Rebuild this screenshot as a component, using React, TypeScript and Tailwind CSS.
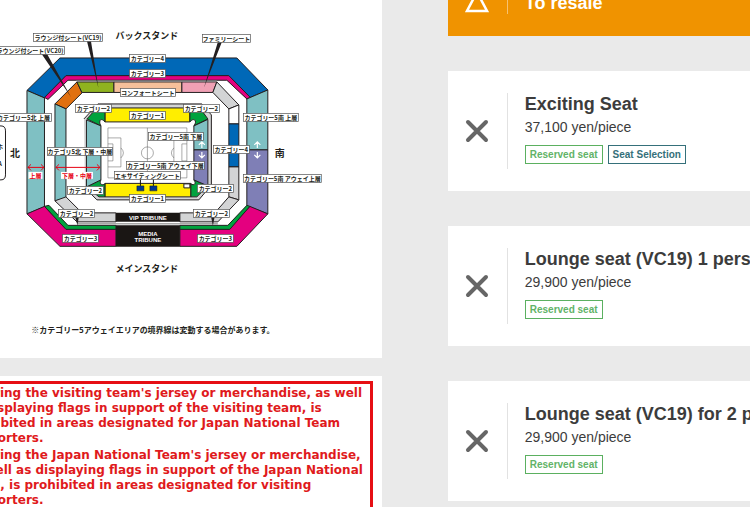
import React from 'react';

type Tag = { text: string; tone: 'green' | 'teal' };

type Seat = { name: string; price: string; tags: Tag[] };

const reserved: Tag = { text: 'Reserved seat', tone: 'green' };

const seats: Seat[] = [
  {
    name: 'Exciting Seat',
    price: '37,100 yen/piece',
    tags: [reserved, { text: 'Seat Selection', tone: 'teal' }],
  },
  { name: 'Lounge seat (VC19) 1 person', price: '29,900 yen/piece', tags: [reserved] },
  { name: 'Lounge seat (VC19) for 2 people', price: '29,900 yen/piece', tags: [reserved] },
];

// x, y, width, text
const labels: [number, number, number, string][] = [
  [33, 33, 70, 'ラウンジ付シート(VC19)'],
  [-5, 46, 70, 'ラウンジ付シート(VC20)'],
  [202, 34, 49, 'ファミリーシート'],
  [129, 54, 37, 'カテゴリー4'],
  [129, 69, 37, 'カテゴリー3'],
  [120, 88, 56, 'コンフォートシート'],
  [75, 104, 37, 'カテゴリー2'],
  [183, 104, 37, 'カテゴリー2'],
  [129, 111, 37, 'カテゴリー1'],
  [-5, 113, 57, 'カテゴリー5北 上層'],
  [243, 113, 56, 'カテゴリー5南 上層'],
  [148, 132, 56, 'カテゴリー5南 下層'],
  [213, 145, 37, 'カテゴリー4'],
  [47, 147, 66, 'カテゴリ5北 下層・中層'],
  [126, 161, 79, 'カテゴリー5南 アウェイ下層'],
  [114, 171, 67, 'エキサイティングシート'],
  [67, 186, 37, 'カテゴリー2'],
  [197, 184, 37, 'カテゴリー2'],
  [129, 194, 37, 'カテゴリー1'],
  [58, 209, 37, 'カテゴリー2'],
  [193, 209, 37, 'カテゴリー2'],
  [62, 234, 37, 'カテゴリー3'],
  [197, 234, 37, 'カテゴリー3'],
  [243, 174, 79, 'カテゴリー5南 アウェイ上層'],
];

function StadiumMap() {
  return (
    <svg
      viewBox="0 0 382 358"
      className="block w-full font-['Noto_Sans_CJK_JP',sans-serif] font-bold"
      role="img"
      aria-label="スタジアム座席図"
    >
      <g stroke="#231f20" strokeWidth="1" strokeLinejoin="round">
        {/* outer ring */}
        <path d="M27 90.5 60 58H237L268 90 247 99 228 76H66L44.5 98Z" fill="#0068b7" />
        <path d="M44.5 97.5 66 75.7H229L250.5 97.5 247 99 227 80.3H68L48 99.5Z" fill="#e4007f" />
        <path d="M27 90.5 44.5 98V207L27 214Z" fill="#7fc0c3" />
        <path d="M268 90 247 99V150H268Z" fill="#7fc0c3" />
        <path d="M247 150H268V214L247 206Z" fill="#7f7fb6" />
        <path d="M27 214 44.5 206.5 66 229H116V246.5H60Z" fill="#e4007f" />
        <path d="M268 214 250 206.5 229 229H180V246.5H237Z" fill="#e4007f" />
        <path d="M44.5 206.5 49 205.5 68 225.5H116V229.5H66Z" fill="#00a33e" />
        <path d="M250 206.5 247 205.5 228 225.5H180V229.5H230Z" fill="#00a33e" />

        {/* middle ring */}
        <path d="M55 104 77 82 82 93 66 109Z" fill="#e07010" />
        <path d="M77 82H114V92.5H82Z" fill="#8fb31f" />
        <path d="M114 82H182V92.5H114Z" fill="#f6c09a" />
        <path d="M182 82H217L213 92.5H182Z" fill="#f0a0b4" />
        <path d="M217 82 239 105 229 109 213 92.5Z" fill="#d3d4d5" />
        <path d="M229 109 239 105V124H229Z" fill="#fff" />
        <path d="M229 124H239V167H229Z" fill="#0068b7" />
        <path d="M229 167H239V200L229 197Z" fill="#d3d4d5" />
        <path d="M239 200 218 222H180V213H215L229 197Z" fill="#d3d4d5" />
        <path d="M55 104 66 109V198L55 201Z" fill="#7fc0c3" />
        <path d="M55 201 66 197 82 213H116V222H77Z" fill="#d3d4d5" />
        <path d="M76 80.8H217M78 224H218" fill="none" stroke="#777" />

        {/* inner ring */}
        <path d="M84 119 98 104H202L211.5 115V185L199 200H97L85 188" fill="#d3d4d5" />
        <path d="M87 119H208V187L197 197H100L87 187Z" fill="#fff" stroke="none" />
        <path d="M105 108H190V122H105Z" fill="#ffee00" />
        <path d="M105 183.5H191V197H105Z" fill="#ffee00" />
        <path d="M87 119 97 108H105V122C101 117 98 121 101 126Z" fill="#00a33e" />
        <path d="M208 119 200 108H190V122C194 117 198 121 194 126Z" fill="#00a33e" />
        <path d="M87 187 101 180C99 184 102 186 105 184V197H99Z" fill="#00a33e" />
        <path d="M208 186 194 180C197 184 194 186 191 184V197H197Z" fill="#00a33e" />
        <path d="M86.5 120 101 126V180L86.5 187Z" fill="#7fc0c3" />
        <path d="M208 119.5 194 126V150H208Z" fill="#7fc0c3" />
        <path d="M194 150H208V186L194 180Z" fill="#7f7fb6" />
        <path d="M184 184H190V188H184Z" fill="#fff" />
      </g>

      {/* pitch */}
      <g fill="none" stroke="#555" strokeWidth="0.5">
        <path d="M108 128H187V178H108ZM147.5 128V178M108 138H121V167H108M108 144H113V161H108M187 138H174V167H187M187 144H182V161H187M121 148Q126 153 121 158M174 148Q169 153 174 158" />
        <circle cx="147.5" cy="153" r="6" />
      </g>
      <path d="M137 186H144V191H137ZM150 186H157V191H150Z" fill="#003894" stroke="#111" strokeWidth="0.5" />
      <path d="M140.5 179V186M153.5 179V186" stroke="#111" />

      {/* press seats */}
      <path d="M116 213H180V222H116ZM116 225.5H180V247H116Z" fill="#1a1614" />
      <g fill="#fff" textAnchor="middle" fontSize="6" fontFamily="Liberation Sans, sans-serif">
        <text x="148" y="220">VIP TRIBUNE</text>
        <text x="148" y="236">MEDIA</text>
        <text x="148" y="242">TRIBUNE</text>
      </g>

      {/* pointers */}
      <path d="M87 41H91L98.5 88ZM41 53 46 52 71 97ZM218 42H222L204 88ZM75 216H79L77.5 226ZM211 216H215L213 226Z" fill="#231f20" />

      {/* tier arrows */}
      <g fill="none" stroke="#e60012" strokeWidth="1">
        <path d="M28 167.5H44M31 164.5 28 167.5 31 170.5M41 164.5 44 167.5 41 170.5" />
        <path d="M56 167.5H100M59 164.5 56 167.5 59 170.5M97 164.5 100 167.5 97 170.5" />
      </g>
      <path
        d="M202 142V148M199 145 202 142 205 145M202 152V158M199 155 202 158 205 155M257.5 142V148M254.5 145 257.5 142 260.5 145M257.5 152V158M254.5 155 257.5 158 260.5 155"
        fill="none"
        stroke="#fff"
        strokeWidth="1.2"
      />

      {labels.map(([x, y, w, text]) => (
        <g key={`${x}-${y}`}>
          <rect x={x + 0.5} y={y + 0.5} width={w - 1} height="8" fill="#fff" stroke="#555" strokeWidth="0.7" />
          <text x={x + w / 2} y={y + 7} textAnchor="middle" fontSize="6" fill="#231f20">
            {text}
          </text>
        </g>
      ))}

      <g textAnchor="middle" fontSize="6" fill="#e60012">
        <rect x="28.5" y="172" width="14" height="7" fill="#fff" />
        <text x="35.5" y="178">上層</text>
        <rect x="61" y="172" width="32" height="7" fill="#fff" />
        <text x="77" y="178">下層・中層</text>
      </g>

      <g fill="#231f20" textAnchor="middle">
        <text x="147" y="39" fontSize="9">バックスタンド</text>
        <text x="147" y="272" fontSize="9">メインスタンド</text>
        <text x="15" y="157" fontSize="10">北</text>
        <text x="280" y="157" fontSize="10">南</text>
        <text x="153" y="333" fontSize="8">※カテゴリー5アウェイエリアの境界線は変動する場合があります。</text>
        <text x="0" y="149" fontSize="6">ホ</text>
        <text x="0" y="166" fontSize="6">A</text>
      </g>
      <path d="M-2 126H1Q5.5 126 5.5 131V175Q5.5 180 1 180H-2" fill="none" stroke="#231f20" />
    </svg>
  );
}

function Notice() {
  return (
    <section className="flex-1 overflow-hidden bg-white pt-[5px] pr-[9px]">
      <div className="h-full border-t-[3px] border-r-[3px] border-[#e60f14] pt-[2px]">
        <div className="-ml-[35px] whitespace-nowrap font-['DejaVu_Sans',Verdana,sans-serif] text-[12px] leading-[15px] font-bold text-[#e01a1c]">
          <p>
            Wearing the visiting team's jersey or merchandise, as well
            <br />
            as displaying flags in support of the visiting team, is
            <br />
            prohibited in areas designated for Japan National Team
            <br />
            supporters.
          </p>
          <p className="mt-0.5">
            Wearing the Japan National Team's jersey or merchandise,
            <br />
            as well as displaying flags in support of the Japan National
            <br />
            Team, is prohibited in areas designated for visiting
            <br />
            supporters.
          </p>
        </div>
      </div>
    </section>
  );
}

function SeatCard({ seat }: { seat: Seat }) {
  return (
    <article className="flex bg-white py-[22px] text-[#3c3c3c]">
      <div className="flex w-[60px] shrink-0 items-center justify-center border-r border-[#e2e2e2]">
        <svg viewBox="0 0 24 24" className="h-6 w-6" aria-label="Sold out">
          <path d="M3 3 21 21M21 3 3 21" stroke="#666" strokeWidth="4" strokeLinecap="round" />
        </svg>
      </div>
      <div className="h-[76px] pl-[17px] whitespace-nowrap">
        <h2 className="text-[18px] leading-[22px] font-bold">{seat.name}</h2>
        <p className="mt-0.5 text-[14px] leading-5">{seat.price}</p>
        <ul className="mt-2 flex gap-[5px]">
          {seat.tags.map((tag) => (
            <li
              key={tag.text}
              className={
                tag.tone === 'green'
                  ? 'border border-[#5bb060] px-1 text-[10px] leading-[17px] font-bold text-[#62b367]'
                  : 'border border-[#35707a] px-1 text-[10px] leading-[17px] font-bold text-[#35707a]'
              }
            >
              {tag.text}
            </li>
          ))}
        </ul>
      </div>
    </article>
  );
}

export default function App() {
  return (
    <main className="flex h-screen overflow-hidden bg-[#eaeaea] font-['Liberation_Sans',Arial,sans-serif]">
      <div className="flex w-[50.9%] shrink-0 flex-col gap-[18px]">
        <section className="bg-white">
          <StadiumMap />
        </section>
        <Notice />
      </div>

      <div className="-mt-[30px] ml-[66px] flex flex-1 flex-col gap-[35px]">
        <a href="#resale" className="flex bg-[#f09300] py-[22px] text-white">
          <span className="flex w-[60px] shrink-0 items-center justify-center border-r border-[#f7c170]">
            <svg viewBox="0 0 24 22" className="h-[22px] w-6" fill="none" aria-hidden="true">
              <path d="M12 0 22 19H2Z" stroke="#fff" strokeWidth="2.5" />
            </svg>
          </span>
          <span className="pl-[17px] text-[18px] leading-[22px] font-bold">To resale</span>
        </a>
        {seats.map((seat) => (
          <SeatCard key={seat.name} seat={seat} />
        ))}
      </div>
    </main>
  );
}
